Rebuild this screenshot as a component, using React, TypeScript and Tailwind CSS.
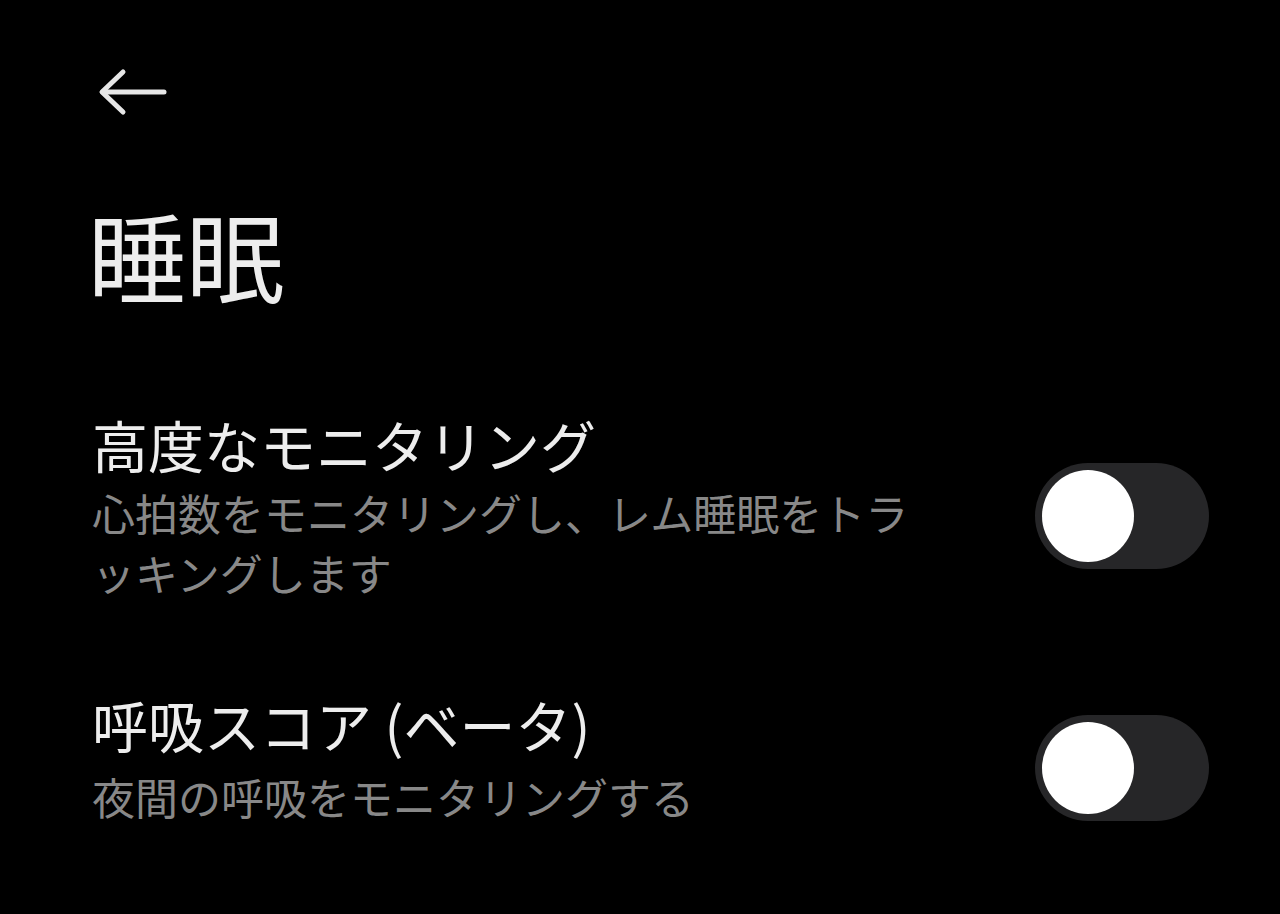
import React from "react";

const jp = { fontFamily: '"Noto Sans CJK JP", "Noto Sans", sans-serif' };

function Toggle() {
  return (
    <div className="mt-[22px] flex h-[106px] w-[174px] shrink-0 items-center rounded-full bg-[#262628] pl-[7px]">
      <div className="h-[92px] w-[92px] rounded-full bg-white" />
    </div>
  );
}

function SettingRow({ title, desc, gap }: { title: string; desc: string; gap: string }) {
  return (
    <div className="flex items-center justify-between pr-[71px]">
      <div className="w-[840px]">
        <div className="text-[56px] leading-[72px] text-[#ededed]">{title}</div>
        <div className={`${gap} text-[43px] leading-[60px] text-[#888888]`}>{desc}</div>
      </div>
      <Toggle />
    </div>
  );
}

export default function App() {
  return (
    <div className="min-h-screen w-full bg-black" style={jp}>
      <div className="pl-[96px] pt-[66px]">
        <svg width="74" height="52" viewBox="0 0 74 52" fill="none" stroke="#e6e6e6" strokeWidth="5" strokeLinecap="round" strokeLinejoin="round">
          <path d="M68 26 H7" />
          <path d="M27 6 L6 26 L27 46" />
        </svg>
      </div>
      <h1 className="mt-[86px] pl-[88px] text-[98px] font-normal leading-[98px] text-[#ededed]">睡眠</h1>
      <div className="mt-[106px] pl-[92px]">
        <SettingRow gap="mt-[2px]" title="高度なモニタリング" desc="心拍数をモニタリングし、レム睡眠をトラッキングします" />
        <div className="mt-[86px]">
          <SettingRow gap="mt-[6px]" title="呼吸スコア (ベータ)" desc="夜間の呼吸をモニタリングする" />
        </div>
      </div>
    </div>
  );
}
